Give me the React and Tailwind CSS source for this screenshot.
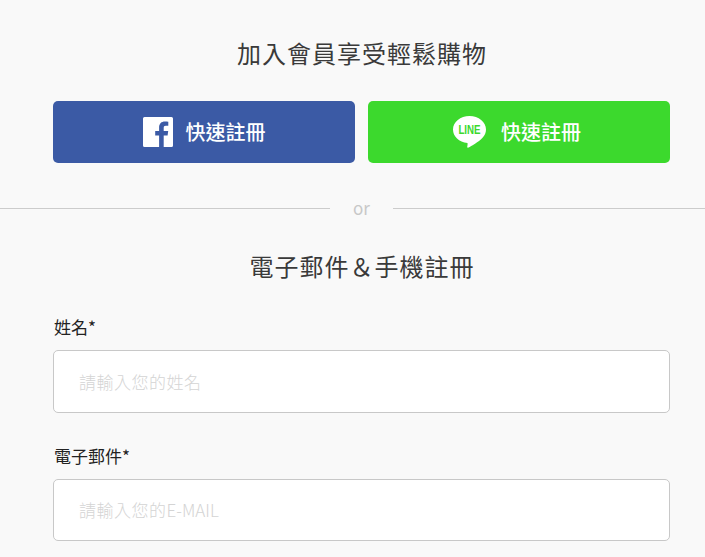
function Fb() {
  return (
    <svg width="30" height="30" viewBox="0 0 30 30" className="shrink-0">
      <path fill="#fff" d="M1.500 0h27A1.500 1.500 0 0 1 30 1.500v27a1.500 1.500 0 0 1-1.500 1.500H20.700V18.400h3.900l.6-4.500h-4.500V11c0-1.300.4-2.200 2.200-2.200h2.400v-4c-.4-.1-1.800-.2-3.400-.2-3.500 0-5.800 2.100-5.800 6v3.300h-3.900v4.500h3.900V30H1.500A1.500 1.500 0 0 1 0 28.500v-27A1.500 1.500 0 0 1 1.500 0z" />
    </svg>
  );
}
function Line() {
  return (
    <svg width="33" height="32" viewBox="0 0 33 32" className="shrink-0">
      <path fill="#fff" d="M16.500 0C7.400 0 0 6 0 13.500c0 7 6 12.600 14.500 13.400.3 1.700-.3 3.400-.3 4.100 0 .7.600.9 1.300.5 2.600-1.300 10.300-5.800 13.800-9.600 2.500-2.600 3.700-5.300 3.700-8.400C33 6 25.600 0 16.500 0z" />
      <text transform="translate(16.500 18.200) scale(.78 1)" textAnchor="middle" fontSize="12.500" fontWeight="700" fill="#3cd92d" fontFamily="'Liberation Sans', sans-serif">LINE</text>
    </svg>
  );
}
function Social({ bg, icon, gap }) {
  return (
    <button className={`flex h-[62px] w-[302px] items-center justify-center rounded-[5px] text-[20px] font-medium text-white ${bg} ${gap}`}>
      {icon}
      <span>快速註冊</span>
    </button>
  );
}
function Field({ label, children, mb, h }) {
  return (
    <div className={mb}>
      <label className="block h-[24px] pl-px text-[17px] leading-[24px] text-[#222]">{label}</label>
      <div className={`mt-[11px] flex items-center rounded-[5px] border border-[#c8c8c8] bg-white px-[25px] text-[17px] font-light tracking-[0.5px] text-[#d4d4d4] ${h}`}>
        {children}
      </div>
    </div>
  );
}
export default function App() {
  return (
    <div className="h-[557px] w-[705px] overflow-hidden bg-[#f9f9f9] font-['Noto_Sans_CJK_TC','Noto_Sans',sans-serif]">
      <h2 className="pt-[35px] pl-[19px] text-center text-[24px] leading-[36px] font-normal tracking-[1px] text-[#3a3a3a]">加入會員享受輕鬆購物</h2>
      <div className="mt-[30px] flex gap-[13px] pr-[35px] pl-[53px]">
        <Social bg="bg-[#3b5aa5]" icon={<Fb />} gap="gap-[13px]" />
        <Social bg="bg-[#3cd92d] pr-[4px]" icon={<Line />} gap="gap-[15px]" />
      </div>
      <div className="mt-[34px] flex h-[22px] items-center">
        <div className="h-px w-[330px] bg-[#cccccc]" />
        <span className="w-[63px] text-center text-[17px] leading-[22px] text-[#c8c8c8]">or</span>
        <div className="h-px flex-1 bg-[#cccccc]" />
      </div>
      <h2 className="mt-[29px] pl-[19px] text-center text-[24px] leading-[36px] font-normal tracking-[1px] text-[#3a3a3a]">電子郵件＆手機註冊</h2>
      <div className="mt-[31px] pr-[35px] pl-[53px]">
        <Field label="姓名*" mb="mb-[31px]" h="h-[63px]">請輸入您的姓名</Field>
        <Field label="電子郵件*" h="h-[62px]">請輸入您的<span className="tracking-normal">E-MAIL</span></Field>
      </div>
    </div>
  );
}
